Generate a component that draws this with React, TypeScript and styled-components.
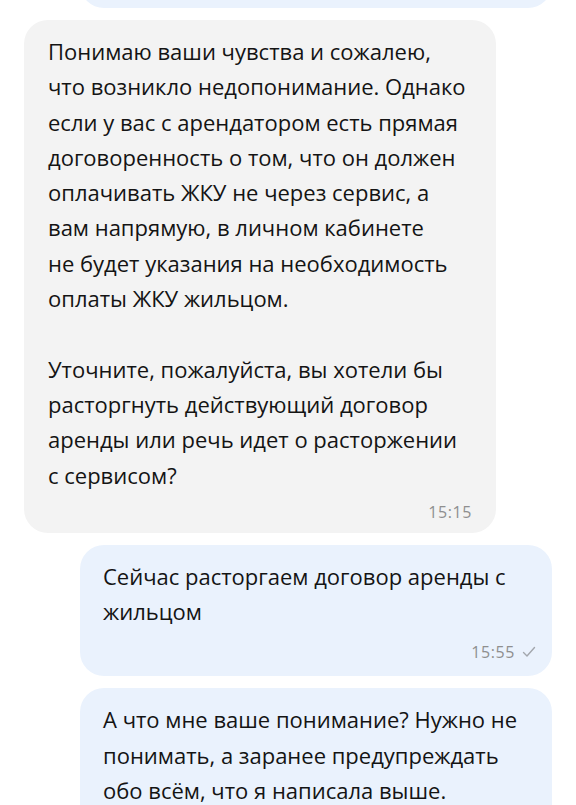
import React from "react";
import styled, { createGlobalStyle } from "styled-components";

type Message = {
  id: number;
  out: boolean;
  text: string[];
  time?: string;
  read?: boolean;
};

const messages: Message[] = [
  {
    id: 1,
    out: false,
    text: [
      "Понимаю ваши чувства и сожалею,",
      "что возникло недопонимание. Однако",
      "если у вас с арендатором есть прямая",
      "договоренность о том, что он должен",
      "оплачивать ЖКУ не через сервис, а",
      "вам напрямую, в личном кабинете",
      "не будет указания на необходимость",
      "оплаты ЖКУ жильцом.",
      "",
      "Уточните, пожалуйста, вы хотели бы",
      "расторгнуть действующий договор",
      "аренды или речь идет о расторжении",
      "с сервисом?",
    ],
    time: "15:15",
  },
  {
    id: 2,
    out: true,
    text: ["Сейчас расторгаем договор аренды с", "жильцом"],
    time: "15:55",
    read: true,
  },
  {
    id: 3,
    out: true,
    text: [
      "А что мне ваше понимание? Нужно не",
      "понимать, а заранее предупреждать",
      "обо всём, что я написала выше.",
    ],
    time: "15:56",
    read: true,
  },
];

const CheckIcon = () => (
  <svg width="14" height="12" viewBox="0 0 14 12" fill="none">
    <polyline
      points="1.5,6.5 5,10 12.5,1.5"
      stroke="#a3a7ad"
      strokeWidth="1.4"
      strokeLinecap="round"
      strokeLinejoin="round"
    />
  </svg>
);

const App = () => {
  return (
    <>
      <GlobalStyle />
      <Screen>
        <Feed>
          <Row $out>
            <PrevBubble />
          </Row>
          {messages.map((m) => (
            <Row key={m.id} $out={m.out}>
              <Bubble $out={m.out}>
                <Text>
                  {m.text.map((line, i) => (
                    <Line key={i}>{line || "\u00a0"}</Line>
                  ))}
                </Text>
                {m.time && (
                  <Meta $out={m.out}>
                    <Time>{m.time}</Time>
                    {m.read && <CheckIcon />}
                  </Meta>
                )}
              </Bubble>
            </Row>
          ))}
        </Feed>
      </Screen>
    </>
  );
};

export default App;

const GlobalStyle = createGlobalStyle`
  html, body {
    margin: 0;
    padding: 0;
    background: #ffffff;
  }

  body {
    font-family: "Open Sans", "Noto Sans", sans-serif;
    color: #1a1a1a;
  }
`;

const Screen = styled.div`
  width: 576px;
  height: 805px;
  overflow: hidden;
  background: #ffffff;
`;

const Feed = styled.div`
  display: flex;
  flex-direction: column;
  gap: 12px;
  margin-top: -52px;
`;

const Row = styled.div<{ $out?: boolean }>`
  display: flex;
  justify-content: ${(p) => (p.$out ? "flex-end" : "flex-start")};
  padding: ${(p) => (p.$out ? "0 24px 0 0" : "0 0 0 24px")};
`;

const PrevBubble = styled.div`
  width: 472px;
  height: 60px;
  border-radius: 24px;
  background: #eaf2fd;
`;

const Bubble = styled.div<{ $out: boolean }>`
  box-sizing: border-box;
  width: 472px;
  padding: ${(p) => (p.$out ? "14px 24px 14px 23px" : "14px 24px 11px")};
  border-radius: 24px;
  background: ${(p) => (p.$out ? "#eaf2fd" : "#f3f3f3")};
`;

const Text = styled.div`
  font-size: 22px;
  line-height: 35.3px;
  color: #141414;
`;

const Line = styled.div`
  white-space: nowrap;
`;

const Meta = styled.div<{ $out?: boolean }>`
  display: flex;
  justify-content: flex-end;
  align-items: center;
  gap: 7px;
  margin-top: ${(p) => (p.$out ? "13px" : "9px")};
  margin-right: ${(p) => (p.$out ? "-8px" : "0")};
  height: 20px;
`;

const Time = styled.span`
  font-size: 16px;
  letter-spacing: 0.6px;
  color: #8f8f8f;
`;
